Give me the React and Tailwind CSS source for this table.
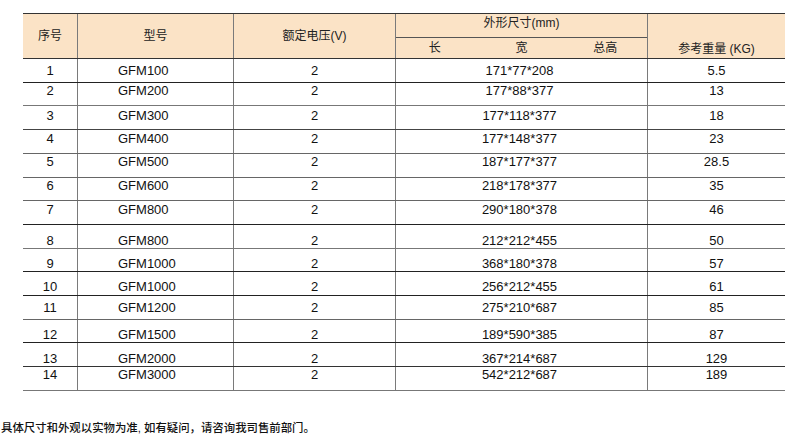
import React from 'react';

// 规格数据：行高、文字偏移和底线颜色按参考图逐行调整
const rows = [
  { no: '1', model: 'GFM100', v: '2', size: '171*77*208', kg: '5.5', h: 'h-[24px]', pt: 'pt-[4px]', line: 'border-[#222]' },
  { no: '2', model: 'GFM200', v: '2', size: '177*88*377', kg: '13', h: 'h-[23px]', pt: 'pt-[0px]', line: 'border-[#777]' },
  { no: '3', model: 'GFM300', v: '2', size: '177*118*377', kg: '18', h: 'h-[24px]', pt: 'pt-[2px]', line: 'border-[#444]' },
  { no: '4', model: 'GFM400', v: '2', size: '177*148*377', kg: '23', h: 'h-[24px]', pt: 'pt-[1px]', line: 'border-[#666]' },
  { no: '5', model: 'GFM500', v: '2', size: '187*177*377', kg: '28.5', h: 'h-[24px]', pt: 'pt-[0px]', line: 'border-[#666]' },
  { no: '6', model: 'GFM600', v: '2', size: '218*178*377', kg: '35', h: 'h-[23px]', pt: 'pt-[0px]', line: 'border-[#666]' },
  { no: '7', model: 'GFM800', v: '2', size: '290*180*378', kg: '46', h: 'h-[24px]', pt: 'pt-[1px]', line: 'border-[#222]' },
  { no: '8', model: 'GFM800', v: '2', size: '212*212*455', kg: '50', h: 'h-[24px]', pt: 'pt-[8px]', line: 'border-[#777]' },
  { no: '9', model: 'GFM1000', v: '2', size: '368*180*378', kg: '57', h: 'h-[23px]', pt: 'pt-[7px]', line: 'border-[#222]' },
  { no: '10', model: 'GFM1000', v: '2', size: '256*212*455', kg: '61', h: 'h-[24px]', pt: 'pt-[7px]', line: 'border-[#222]' },
  { no: '11', model: 'GFM1200', v: '2', size: '275*210*687', kg: '85', h: 'h-[24px]', pt: 'pt-[4px]', line: 'border-[#666]' },
  { no: '12', model: 'GFM1500', v: '2', size: '189*590*385', kg: '87', h: 'h-[23px]', pt: 'pt-[7px]', line: 'border-[#222]' },
  { no: '13', model: 'GFM2000', v: '2', size: '367*214*687', kg: '129', h: 'h-[24px]', pt: 'pt-[8px]', line: 'border-[#333]' },
  { no: '14', model: 'GFM3000', v: '2', size: '542*212*687', kg: '189', h: 'h-[24px]', pt: 'pt-[0px]', line: 'border-[#777]' },
];

function App() {
  return (
    <div className="w-[793px] h-[445px] bg-white text-[#111] font-['Liberation_Sans','Noto_Sans_CJK_SC',sans-serif] overflow-hidden">
      <div className="pt-[13px] pl-[23px]">
        <div className="w-[762px]">
          {/* 表头 */}
          <div className="flex h-[46px] bg-[#fbe3c6] border-t border-b border-[#333] text-[12px] leading-[15px] text-[#222]">
            <div className="w-[55px] border-r border-[#7a7a7a] flex items-center justify-center">序号</div>
            <div className="w-[156px] border-r border-[#7a7a7a] flex items-center justify-center">型号</div>
            <div className="w-[162px] border-r border-[#7a7a7a] flex items-center justify-center">额定电压(V)</div>
            <div className="w-[252px] border-r border-[#7a7a7a] flex flex-col">
              <div className="h-[24px] border-b border-[#555] flex justify-center pt-[2px]">外形尺寸(mm)</div>
              <div className="flex-1 grid grid-cols-3 items-center text-center">
                <span className="pr-[6px]">长</span>
                <span>宽</span>
                <span>总高</span>
              </div>
            </div>
            <div className="w-[137px] flex items-end justify-center pb-px">参考重量 (KG)</div>
          </div>

          {/* 数据行 */}
          {rows.map((r) => (
            <div key={r.no} className={`flex border-b ${r.h} ${r.line} text-[13px] leading-[15px]`}>
              <div className={`w-[55px] border-r border-[#7a7a7a] text-center ${r.pt}`}>{r.no}</div>
              <div className={`w-[156px] border-r border-[#7a7a7a] pl-[40px] ${r.pt}`}>{r.model}</div>
              <div className={`w-[162px] border-r border-[#7a7a7a] text-center ${r.pt}`}>{r.v}</div>
              <div className={`w-[252px] border-r border-[#7a7a7a] text-center pr-[4px] ${r.pt}`}>{r.size}</div>
              <div className={`w-[137px] text-center ${r.pt}`}>{r.kg}</div>
            </div>
          ))}
        </div>
      </div>

      {/* 备注 */}
      <p className="mt-[29px] pl-px text-[11.4px] leading-[16px] text-[#111] font-medium">
        具体尺寸和外观以实物为准, 如有疑问，请咨询我司售前部门。
      </p>
    </div>
  );
}

export default App;
